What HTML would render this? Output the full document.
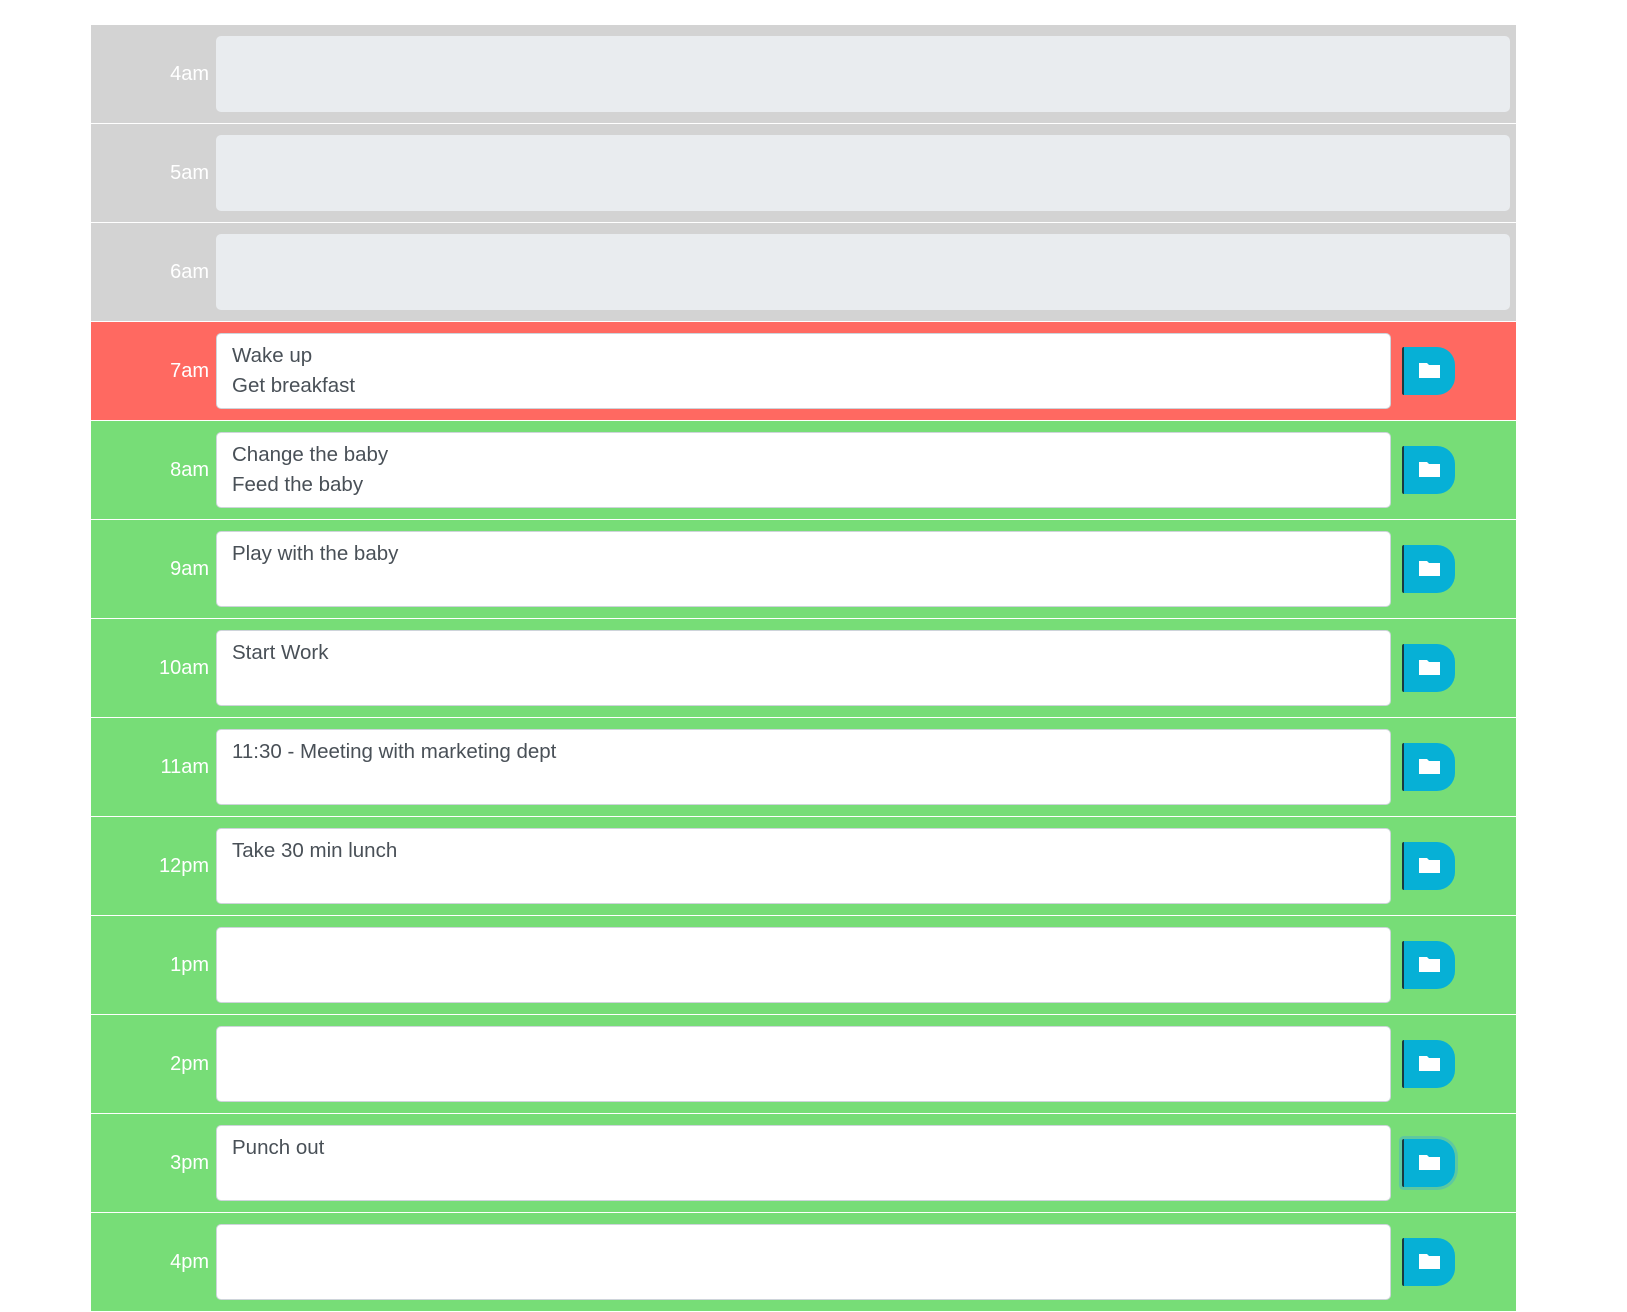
<!DOCTYPE html>
<html><head><style>
html,body{margin:0;padding:0;background:#fff;width:1627px;height:1245px;overflow:hidden;font-family:"Liberation Sans",sans-serif;}
.wrap{position:absolute;left:91px;top:25px;width:1425px;}
.row{position:relative;height:98px;border-bottom:1px solid #fff;}
.past{background:#d3d3d3}.present{background:#ff6961}.future{background:#77dd77}
.lbl{position:absolute;right:1307px;top:0;line-height:98px;color:#fff;font-size:20px;}
.ta{position:absolute;left:125px;top:11px;height:76px;width:1175px;background:#fff;border:1px solid #ced4da;border-radius:5px;box-sizing:border-box;padding:7px 15px;color:#495057;font-size:20.5px;line-height:30px;}
.past .ta{width:1294px;background:#e9ecef;border-color:#e9ecef}
.btn{position:absolute;left:1311px;top:25px;width:53px;height:48px;background:#06b0d6;border-left:2px solid #1a3a40;box-sizing:border-box;border-radius:2px 18px 18px 2px;}
.btn svg{position:absolute;left:15px;top:15px}
</style></head><body><div class="wrap">
<div class="row past"><div class="lbl">4am</div><div class="ta"></div></div>
<div class="row past"><div class="lbl">5am</div><div class="ta"></div></div>
<div class="row past"><div class="lbl">6am</div><div class="ta"></div></div>
<div class="row present"><div class="lbl">7am</div><div class="ta">Wake up<br>Get breakfast</div><div class="btn"><svg width="21" height="16" viewBox="0 0 21 16"><path d="M0 1h8l2 2h11v13H0z" fill="#fff"/></svg></div></div>
<div class="row future"><div class="lbl">8am</div><div class="ta">Change the baby<br>Feed the baby</div><div class="btn"><svg width="21" height="16" viewBox="0 0 21 16"><path d="M0 1h8l2 2h11v13H0z" fill="#fff"/></svg></div></div>
<div class="row future"><div class="lbl">9am</div><div class="ta">Play with the baby</div><div class="btn"><svg width="21" height="16" viewBox="0 0 21 16"><path d="M0 1h8l2 2h11v13H0z" fill="#fff"/></svg></div></div>
<div class="row future"><div class="lbl">10am</div><div class="ta">Start Work</div><div class="btn"><svg width="21" height="16" viewBox="0 0 21 16"><path d="M0 1h8l2 2h11v13H0z" fill="#fff"/></svg></div></div>
<div class="row future"><div class="lbl">11am</div><div class="ta">11:30 - Meeting with marketing dept</div><div class="btn"><svg width="21" height="16" viewBox="0 0 21 16"><path d="M0 1h8l2 2h11v13H0z" fill="#fff"/></svg></div></div>
<div class="row future"><div class="lbl">12pm</div><div class="ta">Take 30 min lunch</div><div class="btn"><svg width="21" height="16" viewBox="0 0 21 16"><path d="M0 1h8l2 2h11v13H0z" fill="#fff"/></svg></div></div>
<div class="row future"><div class="lbl">1pm</div><div class="ta"></div><div class="btn"><svg width="21" height="16" viewBox="0 0 21 16"><path d="M0 1h8l2 2h11v13H0z" fill="#fff"/></svg></div></div>
<div class="row future"><div class="lbl">2pm</div><div class="ta"></div><div class="btn"><svg width="21" height="16" viewBox="0 0 21 16"><path d="M0 1h8l2 2h11v13H0z" fill="#fff"/></svg></div></div>
<div class="row future"><div class="lbl">3pm</div><div class="ta">Punch out</div><div class="btn" style="box-shadow:0 0 0 3px #5ec8a0"><svg width="21" height="16" viewBox="0 0 21 16"><path d="M0 1h8l2 2h11v13H0z" fill="#fff"/></svg></div></div>
<div class="row future"><div class="lbl">4pm</div><div class="ta"></div><div class="btn"><svg width="21" height="16" viewBox="0 0 21 16"><path d="M0 1h8l2 2h11v13H0z" fill="#fff"/></svg></div></div>
</div></body></html>
